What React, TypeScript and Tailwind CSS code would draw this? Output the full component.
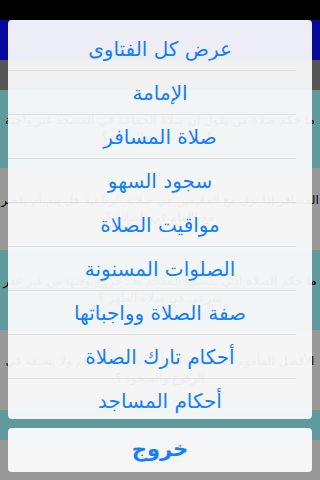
const options = [
  "عرض كل الفتاوى",
  "الإمامة",
  "صلاة المسافر",
  "سجود السهو",
  "مواقيت الصلاة",
  "الصلوات المسنونة",
  "صفة الصلاة وواجباتها",
  "أحكام تارك الصلاة",
  "أحكام المساجد",
];

const rows = [
  { bg: "bg-[#5f9a9c]", h: "h-[78px]", text: "ما حكم صلاة من يقول إن صلاة الجماعة في المسجد غير واجبة على المسافر والمقيم ؟" },
  { bg: "bg-[#999999]", h: "h-[82px]", text: "المسافر إذا نزل مع المقيمين في صلاته الرباعية هل يتم أم يقصر مع الإمام في الصلاة ؟" },
  { bg: "bg-[#5f9a9c]", h: "h-[80px]", text: "ما حكم الصلاة التي يقضيها المسلم بعد خروج وقتها من غير عذر شرعي في صلاة الظهر ؟" },
  { bg: "bg-[#999999]", h: "h-[80px]", text: "الأفضل للمأموم في صلاة الجماعة أن يتابع الإمام ولا يسبقه في الركوع والسجود ؟" },
  { bg: "bg-[#5f9a9c]", h: "h-[30px]", text: "" },
];

export default function App() {
  return (
    <div
      className="relative w-[320px] h-[480px] overflow-hidden bg-[#999999]"
      style={{ fontFamily: '"DejaVu Sans", sans-serif' }}
      dir="rtl"
    >
      {/* dimmed app underneath */}
      <div className="flex flex-col">
        <div className="h-5 bg-black" />
        <div className="h-10 bg-[#08089a]" />
        <div className="h-[30px] bg-[#555555]" />
        {rows.map((r, i) => (
          <div
            key={i}
            className={`${r.bg} ${r.h} flex items-center justify-center text-center text-[12px] leading-[17px] text-black overflow-hidden`}
          >
            {r.text}
          </div>
        ))}
        <div className="h-10 bg-[#999999]" />
      </div>

      {/* action sheet */}
      <div className="absolute inset-x-2 top-5 bottom-2 flex flex-col gap-[9px]">
        <div className="flex-1 overflow-hidden rounded bg-[rgba(250,250,251,0.95)] pt-[7px]">
          {options.map((o, i) => (
            <div key={i} className="relative h-11 flex items-center justify-center">
              <span className="text-[20px] text-[#157efb]">{o}</span>
              <div className="absolute bottom-0 left-0 right-4 h-px bg-[#dedee2]" />
            </div>
          ))}
        </div>
        <div className="h-11 shrink-0 rounded bg-[rgba(250,250,251,0.96)] flex items-center justify-center">
          <span className="text-[21px] font-bold text-[#157efb]">خروج</span>
        </div>
      </div>
    </div>
  );
}
